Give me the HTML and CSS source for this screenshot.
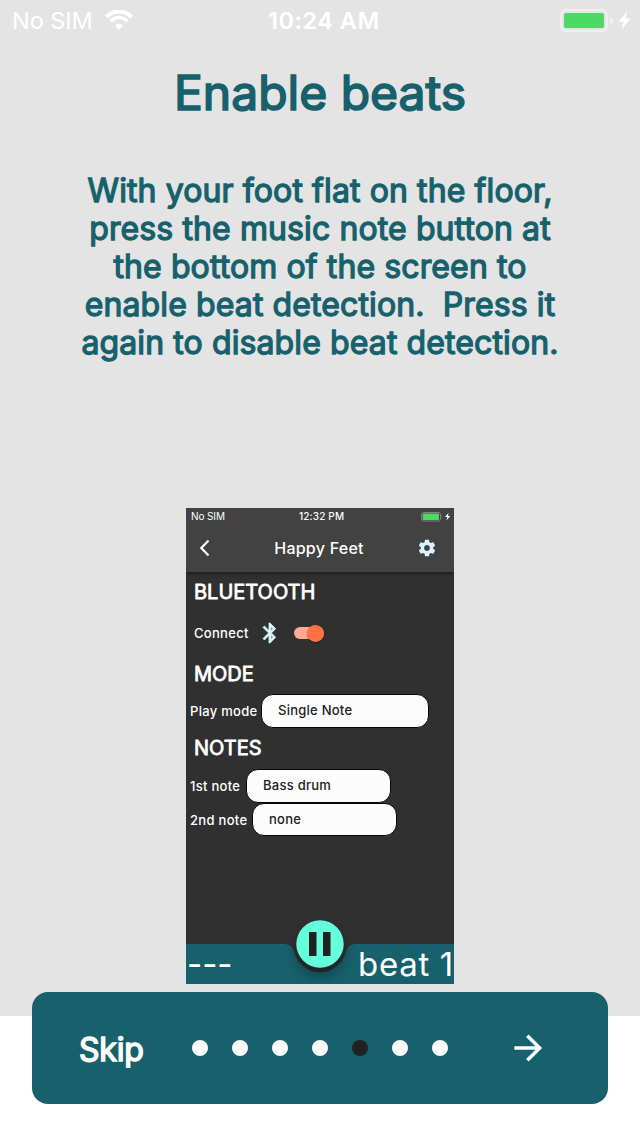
FILE: index.html
```html
<!DOCTYPE html>
<html lang="en">
<head>
<meta charset="utf-8">
<title>Enable beats</title>
<link rel="stylesheet" href="styles.css">
</head>
<body>
<main class="page">
  <header class="status">
    <span class="carrier">No SIM</span>
    <svg class="wifi" width="28" height="20" viewBox="0 0 28 20"><path d="M1.200 6.900Q14-4.300 26.800 6.900" fill="none" stroke="#fff" stroke-width="4"/><path d="M5.600 11.200Q14 3.900 22.400 11.200" fill="none" stroke="#fff" stroke-width="3.500"/><path d="M9.700 15.500Q14 11.900 18.300 15.500L14 19.800Z" fill="#fff"/></svg>
    <span class="clock">10:24 AM</span>
    <svg class="battery" width="72" height="24" viewBox="0 0 72 24"><rect x="1" y="1" width="46" height="21" rx="5" fill="none" stroke="#efefef" stroke-width="2"/><rect x="4" y="4" width="40" height="15" rx="2" fill="#4cd964"/><path d="M50 8q3 1 3 4t-3 4z" fill="#f0f0f0"/><path d="M67.500 2L58.500 12.500H63.500L61.500 20.500L70.500 9.500H65.500Z" fill="#fff"/></svg>
  </header>
  <h1 class="title">Enable beats</h1>
  <p class="copy">With your foot flat on the floor,<br>press the music note button at<br>the bottom of the screen to<br>enable beat detection.&nbsp; Press it<br>again to disable beat detection.</p>
  <section class="phone">
    <div class="appbar">
      <div class="mini-status">
        <span class="mini-carrier">No SIM</span>
        <span class="mini-clock">12:32 PM</span>
        <svg class="mini-battery" width="30" height="10" viewBox="0 0 30 10"><rect x=".5" y=".5" width="19" height="8.500" rx="2" fill="none" stroke="#828282"/><rect x="1.700" y="1.500" width="16.300" height="6.500" rx=".6" fill="#4cd964"/><path d="M21 3.200q1.400 1.500 0 3z" fill="#828282"/><path d="M27.500.8L24 5H26.300L25.400 8.600L29.300 4.100H27Z" fill="#fff"/></svg>
      </div>
      <div class="toolbar">
        <svg class="back" width="12" height="18" viewBox="0 0 12 18"><path d="M10.500 1.500L3.300 9L10.500 16.500" fill="none" stroke="#fff" stroke-width="2.200"/></svg>
        <h2 class="app-title">Happy Feet</h2>
        <svg class="gear" width="20" height="20" viewBox="0 0 24 24"><path fill="#d8f4fb" d="M19.430 12.980c.04-.32.07-.64.07-.98s-.03-.66-.07-.98l2.110-1.650c.19-.15.24-.42.12-.64l-2-3.460c-.12-.22-.39-.3-.61-.22l-2.490 1c-.52-.4-1.080-.73-1.690-.98l-.38-2.650C14.460 2.180 14.250 2 14 2h-4c-.25 0-.46.18-.49.42l-.38 2.650c-.61.25-1.170.59-1.690.98l-2.490-1c-.23-.09-.49 0-.61.22l-2 3.460c-.13.22-.07.49.12.64l2.110 1.650c-.04.32-.07.65-.07.98s.03.66.07.98l-2.110 1.650c-.19.15-.24.42-.12.64l2 3.460c.12.22.39.3.61.22l2.490-1c.52.4 1.080.73 1.690.98l.38 2.650c.03.24.24.42.49.42h4c.25 0 .46-.18.49-.42l.38-2.650c.61-.25 1.170-.59 1.690-.98l2.490 1c.23.09.49 0 .61-.22l2-3.460c.12-.22.07-.49-.12-.64l-2.110-1.650zM12 15.500c-1.930 0-3.500-1.570-3.500-3.500s1.570-3.500 3.500-3.500 3.500 1.570 3.500 3.500-1.570 3.500-3.500 3.500z"/></svg>
      </div>
    </div>
    <div class="settings">
      <h3 class="group bt">BLUETOOTH</h3>
      <div class="connect">
        <span class="label">Connect</span>
        <svg class="bluetooth" width="24" height="24" viewBox="0 0 24 24"><path fill="#d8f4fb" stroke="#d8f4fb" stroke-width=".8" d="M17.710 7.710L12 2h-1v7.590L6.410 5 5 6.410 10.590 12 5 17.590 6.410 19 11 14.410V22h1l5.710-5.710L13.410 12l4.300-4.290zM13 5.830l1.880 1.880L13 9.590V5.830zm1.880 10.460L13 18.170v-3.760l1.880 1.880z"/></svg>
        <span class="switch"><span class="knob"></span></span>
      </div>
      <h3 class="group mode">MODE</h3>
      <div class="field play"><span class="label">Play mode</span><span class="select">Single Note</span></div>
      <h3 class="group notes">NOTES</h3>
      <div class="field first"><span class="label">1st note</span><span class="select">Bass drum</span></div>
      <div class="field second"><span class="label">2nd note</span><span class="select">none</span></div>
    </div>
    <div class="beatbar">
      <svg class="notch" width="268" height="90" viewBox="0 0 268 90"><defs><filter id="soft" x="-50%" y="-50%" width="200%" height="200%"><feGaussianBlur stdDeviation="7"/></filter></defs><path d="M0 50H98C105 50 107 54 108.500 59A26.500 26.500 0 0 0 159.500 59C161 54 163 50 170 50H268V90H0Z" fill="#17616d"/><circle cx="134" cy="59" r="23" fill="#000" opacity=".32" filter="url(#soft)"/><path d="M107.500 50A26.700 26.700 0 0 0 160.500 50Z" fill="#292929"/><circle cx="134" cy="50" r="23.700" fill="#64ffda"/><path d="M123 38h7.500v24H123zM137 38h7.500v24H137z" fill="#212121"/></svg>
      <span class="dashes">---</span><span class="count">beat 1</span>
    </div>
  </section>
  <nav class="pager">
    <span class="skip">Skip</span>
    <div class="dots"><i class="dot"></i><i class="dot"></i><i class="dot"></i><i class="dot"></i><i class="dot active"></i><i class="dot"></i><i class="dot"></i></div>
    <svg class="next" width="30" height="30" viewBox="0 0 30 30"><path d="M1.300 15H26M14.300 2.700L26.600 15L14.300 27.300" fill="none" stroke="#fff" stroke-width="3.500"/></svg>
  </nav>
</main>
</body>
</html>
```
FILE: styles.css
```css
* { box-sizing: border-box; }
body { margin: 0; background: #fff; font-family: Inter, "Liberation Sans", sans-serif; }
h1, h2, h3, p { margin: 0; font-weight: 400; }
svg { display: block; flex: none; }
.page { display: flex; flex-direction: column; align-items: center; width: 640px; height: 1136px; background: linear-gradient(#e4e4e4 1016px, #fff 1016px); }
.status { display: flex; align-items: flex-start; width: 640px; height: 40px; padding-left: 12px; color: #fff; white-space: nowrap; }
.carrier { width: 93px; font-size: 23.500px; line-height: 41px; letter-spacing: -.05px; }
.wifi { margin-top: 10px; }
.clock { width: 291px; padding-left: 135px; font-size: 23.500px; line-height: 41px; font-weight: 600; letter-spacing: .5px; }
.battery { margin: 9px 0 0 136px; }
.title { height: 58px; margin-top: 24px; font-size: 48px; line-height: 58px; color: #17616d; -webkit-text-stroke: 1.700px #17616d; white-space: nowrap; }
.copy { height: 190px; margin-top: 50px; font-size: 32px; line-height: 38px; letter-spacing: .11px; color: #17616d; text-align: center; white-space: nowrap; -webkit-text-stroke: 1.300px #17616d; }
.phone { width: 268px; height: 476px; margin-top: 146px; background: #303030; color: #fff; white-space: nowrap; overflow: hidden; }
.appbar { height: 64px; background: #424242; box-shadow: 0 1px 4px rgba(0,0,0,.5); }
.mini-status { display: flex; height: 17px; padding-left: 5px; line-height: 17px; font-size: 10px; }
.mini-carrier { width: 108px; letter-spacing: -.1px; }
.mini-clock { width: 122px; font-weight: 500; letter-spacing: .15px; }
.mini-battery { margin-top: 4px; }
.toolbar { display: flex; align-items: center; height: 46px; padding: 0 17px 0 12px; }
.app-title { flex: 1; text-align: center; padding-left: 11px; font-size: 16px; font-weight: 500; letter-spacing: .25px; }
.settings { height: 372px; padding-top: 8px; }
.group { height: 24px; padding-left: 8px; font-size: 20px; line-height: 24px; -webkit-text-stroke: .8px #fff; }
.connect { display: flex; align-items: center; height: 24px; margin-top: 17px; padding-left: 8px; }
.label { font-size: 13px; font-weight: 500; letter-spacing: .3px; line-height: 14px; }
.connect .label { width: 64px; }
.switch { display: flex; justify-content: flex-end; align-items: center; width: 30px; height: 12px; margin-left: 12px; border-radius: 6px; background: #ffab91; }
.knob { width: 17px; height: 17px; border-radius: 50%; background: #ff7043; box-shadow: 0 1px 2px rgba(0,0,0,.35); }
.mode { margin-top: 17px; }
.field { display: flex; align-items: center; height: 34px; padding-left: 4px; }
.play { margin-top: 8px; }
.play .label { width: 71px; }
.play .select { width: 168px; }
.notes { margin-top: 8px; }
.first { margin-top: 9px; }
.first .label { width: 56px; }
.second { height: 33px; }
.second .label { width: 62px; }
.select { width: 145px; height: 34px; padding-left: 16px; border: 1px solid #050505; border-radius: 12px; background: #fcfcfc; color: #212121; font-size: 13px; font-weight: 500; line-height: 31px; letter-spacing: .25px; }
.second .select { height: 33px; line-height: 30px; }
.beatbar { position: relative; display: flex; justify-content: space-between; height: 40px; padding-left: 1px; font-size: 33px; line-height: 41px; }
.notch { position: absolute; left: 0; bottom: 0; }
.dashes, .count { position: relative; }
.count { letter-spacing: .7px; }
.pager { display: flex; align-items: center; width: 576px; height: 112px; margin-top: 8px; padding-left: 47px; border-radius: 16px; background: #17616d; }
.skip { width: 113px; padding-top: 4px; font-size: 32px; line-height: 38px; letter-spacing: -.2px; color: #fcfcfc; -webkit-text-stroke: 1.500px #fcfcfc; }
.dots { display: flex; gap: 24px; }
.dot { width: 16px; height: 16px; border-radius: 50%; background: #fcfcfc; }
.active { background: #212121; }
.next { margin-left: 65px; }
```
